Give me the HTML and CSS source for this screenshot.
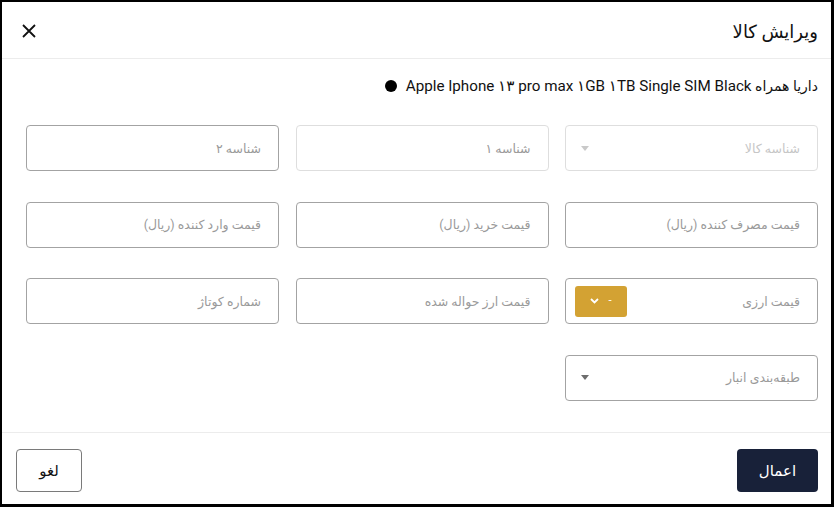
FILE: index.html
```html
<!DOCTYPE html>
<html lang="fa" dir="rtl">
<head>
<meta charset="utf-8">
<title>ویرایش کالا</title>
<link rel="stylesheet" href="styles.css">
</head>
<body>
<div class="dialog">
  <header class="dlg-head">
    <h1 class="dlg-title">ویرایش کالا</h1>
    <button class="close-btn" aria-label="بستن">
      <svg width="14" height="14" viewBox="0 0 14 14"><path d="M1 1L13 13M13 1L1 13" stroke="#111" stroke-width="1.8" fill="none"/></svg>
    </button>
  </header>
  <main class="dlg-body">
    <div class="product">
      <span class="product-name">داریا همراه <span class="latin">Apple Iphone ۱۳ pro max ۱GB ۱TB Single SIM Black</span></span>
      <span class="dot"></span>
    </div>
    <div class="grid">
      <div class="field field-disabled field-select">
        <span class="ph ph-light">شناسه کالا</span>
        <span class="caret caret-light"></span>
      </div>
      <div class="field field-disabled">
        <span class="ph">شناسه ۱</span>
      </div>
      <div class="field">
        <span class="ph">شناسه ۲</span>
      </div>

      <div class="field"><span class="ph">قیمت مصرف کننده (ریال)</span></div>
      <div class="field"><span class="ph">قیمت خرید (ریال)</span></div>
      <div class="field"><span class="ph">قیمت وارد کننده (ریال)</span></div>

      <div class="field field-currency">
        <span class="ph">قیمت ارزی</span>
        <button class="cur-btn">
          <span class="cur-val">-</span>
          <svg width="9" height="6" viewBox="0 0 9 6"><path d="M1 1L4.5 4.5L8 1" stroke="#fff" stroke-width="1.8" fill="none"/></svg>
        </button>
      </div>
      <div class="field"><span class="ph">قیمت ارز حواله شده</span></div>
      <div class="field"><span class="ph">شماره کوتاژ</span></div>

      <div class="field field-select">
        <span class="ph">طبقه‌بندی انبار</span>
        <span class="caret"></span>
      </div>
    </div>
  </main>
  <footer class="dlg-foot">
    <button class="btn btn-primary">اعمال</button>
    <button class="btn btn-outline">لغو</button>
  </footer>
</div>
</body>
</html>
```
FILE: styles.css
```css
* { box-sizing: border-box; }
html, body { margin: 0; padding: 0; background: #fff; }
body {
  font-family: Roboto, "DejaVu Sans", sans-serif;
  color: #1d1d1d;
}
.dialog {
  width: 834px;
  height: 507px;
  border: 2px solid #000;
  border-bottom-width: 3px;
  border-right-width: 3px;
  display: flex;
  flex-direction: column;
  background: #fff;
}
.dlg-head {
  height: 57px;
  display: flex;
  align-items: center;
  justify-content: space-between;
  padding: 2px 13px 0 19px;
  border-bottom: 1px solid #ececec;
}
.dlg-title {
  margin: 0;
  font-size: 18px;
  font-weight: 400;
  color: #111;
}
.close-btn {
  border: 0;
  background: none;
  padding: 0;
  width: 16px;
  height: 16px;
  display: flex;
  align-items: center;
  justify-content: center;
  cursor: pointer;
}
.dlg-body {
  flex: 1;
  padding: 17px 13px 0 24px;
}
.product {
  display: flex;
  align-items: center;
  gap: 9px;
  height: 20px;
  font-size: 14px;
  color: #111;
}
.latin { font-size: 15.2px; }
.dot {
  width: 12px;
  height: 12px;
  border-radius: 50%;
  background: #000;
}
.grid {
  margin-top: 29px;
  display: grid;
  grid-template-columns: repeat(3, 1fr);
  column-gap: 16.5px;
  row-gap: 30.67px;
}
.field {
  height: 46px;
  border: 1px solid #a3a3a3;
  border-radius: 4px;
  display: flex;
  align-items: center;
  padding: 0 17px 0 14px;
  position: relative;
}
.field-disabled { border-color: #dedede; }
.ph {
  font-size: 12.5px;
  color: #9a9a9a;
}
.ph-light { color: #c6c6c6; }
.field-select { justify-content: space-between; }
.caret {
  width: 0;
  height: 0;
  border-left: 4.5px solid transparent;
  border-right: 4.5px solid transparent;
  border-top: 5px solid #6d6d6d;
  margin-left: 1px;
}
.caret-light { border-top-color: #c9c9c9; }
.field-currency {
  justify-content: space-between;
  padding-left: 9px;
}
.cur-btn {
  width: 52px;
  height: 31px;
  border: 0;
  border-radius: 3px;
  background: #d3a233;
  display: flex;
  align-items: center;
  justify-content: center;
  gap: 9px;
  padding: 0;
  direction: rtl;
}
.cur-val {
  color: #fff;
  font-size: 11px;
  line-height: 1;
  margin-top: -4px;
}
.dlg-foot {
  border-top: 1px solid #ececec;
  display: flex;
  justify-content: space-between;
  align-items: flex-start;
  padding: 16px 13px 0 14px;
  height: 72px;
}
.btn {
  height: 43px;
  border-radius: 4px;
  font-family: Roboto, "DejaVu Sans", sans-serif;
  font-size: 15px;
  cursor: pointer;
}
.btn-primary {
  width: 81px;
  background: #182139;
  color: #fff;
  border: 0;
  font-weight: 500;
}
.btn-outline {
  width: 66px;
  background: #fff;
  color: #111;
  border: 1px solid #7a7a7a;
}
```
